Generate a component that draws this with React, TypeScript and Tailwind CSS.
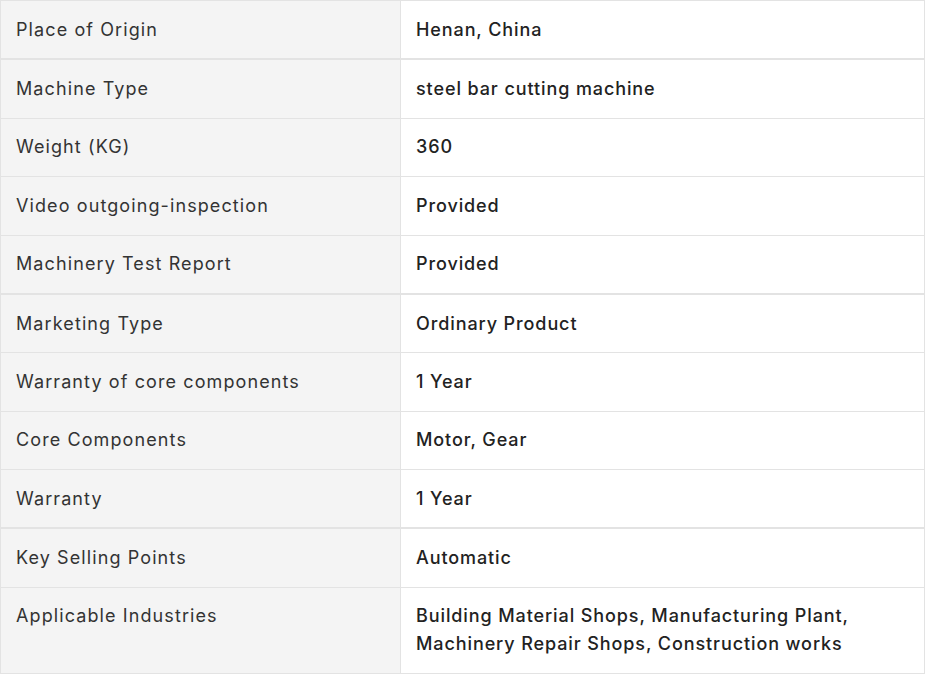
import * as React from 'react';

type Spec = { label: string; value: string };

// groups stack like separate tables, so their borders double up
const groups: Spec[][] = [
  [{ label: 'Place of Origin', value: 'Henan, China' }],
  [
    { label: 'Machine Type', value: 'steel bar cutting machine' },
    { label: 'Weight (KG)', value: '360' },
    { label: 'Video outgoing-inspection', value: 'Provided' },
    { label: 'Machinery Test Report', value: 'Provided' },
  ],
  [
    { label: 'Marketing Type', value: 'Ordinary Product' },
    { label: 'Warranty of core components', value: '1 Year' },
    { label: 'Core Components', value: 'Motor, Gear' },
    { label: 'Warranty', value: '1 Year' },
  ],
  [
    { label: 'Key Selling Points', value: 'Automatic' },
    {
      label: 'Applicable Industries',
      value: 'Building Material Shops, Manufacturing Plant, Machinery Repair Shops, Construction works',
    },
  ],
];

function SpecRow({ spec, last }: { spec: Spec; last: boolean }) {
  return (
    <div className={`flex ${last ? '' : 'border-b border-[#e3e3e3]'}`}>
      <div className="w-[399px] shrink-0 bg-[#f4f4f4] px-[15px] py-[14.7px] text-[18px] leading-[28px] tracking-[1.1px] text-[#333]">
        {spec.label}
      </div>
      <div className="flex-1 border-l border-[#e3e3e3] bg-white px-[15px] py-[14.7px] text-[18px] leading-[28px] tracking-[0.9px] font-medium text-[#222]">
        {spec.value}
      </div>
    </div>
  );
}

export default function App() {
  return (
    <div className="w-[925px] bg-white" style={{ fontFamily: 'Inter, "Noto Sans", sans-serif' }}>
      {groups.map((rows, gi) => (
        <div key={gi} className="border border-[#e3e3e3]">
          {rows.map((spec, i) => (
            <SpecRow key={spec.label} spec={spec} last={i === rows.length - 1} />
          ))}
        </div>
      ))}
    </div>
  );
}
